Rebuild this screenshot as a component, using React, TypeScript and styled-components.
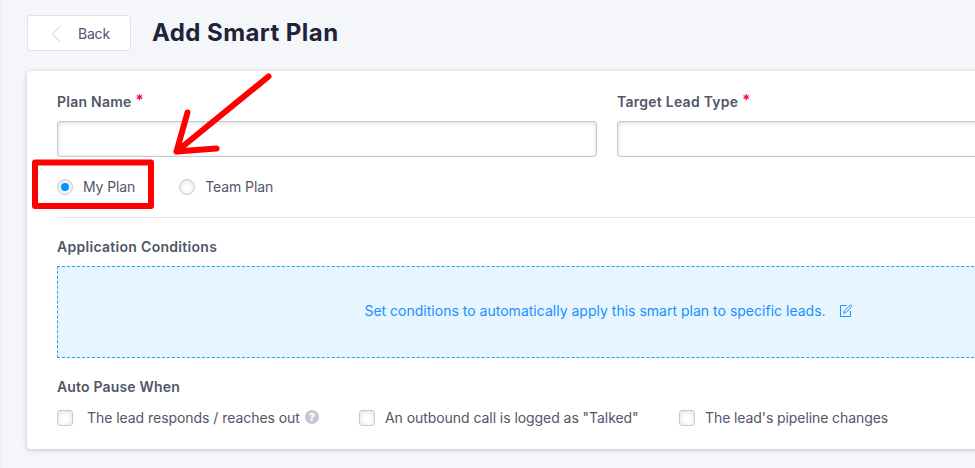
import React from "react";
import styled, { createGlobalStyle } from "styled-components";

const Global = createGlobalStyle`
  * { box-sizing: border-box; }
  body { margin: 0; background: #f5f6fa; overflow: hidden; }
`;

const Page = styled.main`
  position: relative;
  width: 975px;
  height: 468px;
  overflow: hidden;
  padding: 15px 0 0 27px;
  background: #f5f6fa;
  box-shadow: inset 3px 2px 3px -2px rgba(30, 35, 65, 0.05);
  color: #515669;
  font: 400 14px/20px Inter, sans-serif;
`;

const Header = styled.header`
  display: flex;
  align-items: center;
  gap: 21px;
  height: 36px;
`;

const BackButton = styled.button`
  display: flex;
  align-items: center;
  gap: 17px;
  width: 104px;
  height: 36px;
  padding: 2px 0 0 23px;
  border: 1px solid #dfe1e8;
  border-radius: 3px;
  background: #fff;
  color: #515669;
  font: inherit;
  letter-spacing: -0.2px;
  svg { display: block; }
`;

const Title = styled.h1`
  margin: 0;
  color: #202238;
  font-size: 24px;
  line-height: 34px;
  font-weight: 700;
  letter-spacing: 0.43px;
`;

const Card = styled.section`
  width: 1162px;
  height: 378px;
  margin-top: 20px;
  padding: 21px 30px 0;
  border-radius: 4px;
  background: #fff;
  box-shadow: 0 1px 5px rgba(20, 20, 30, 0.23);
`;

const Fields = styled.div`
  display: grid;
  grid-template-columns: 540px 540px;
  gap: 20px;
`;

const Label = styled.div<{ $spacing: number }>`
  height: 20px;
  font-weight: 600;
  letter-spacing: ${(p) => p.$spacing}px;
  white-space: nowrap;
`;

const Required = styled.span`
  display: inline-block;
  margin-left: 4px;
  color: #f5004b;
  font-size: 15px;
  line-height: 16px;
  vertical-align: 2px;
`;

const Input = styled.input`
  display: block;
  width: 100%;
  height: 36px;
  margin-top: 9px;
  border: 1px solid #c5c7d3;
  border-radius: 3px;
  background: #fff;
  box-shadow: inset 0 1px 4px rgba(35, 35, 60, 0.17);
`;

const RadioRow = styled.div`
  display: flex;
  gap: 44px;
  height: 60px;
  padding-top: 20px;
`;

const Option = styled.label<{ $gap: number; $spacing: number }>`
  display: flex;
  align-items: center;
  gap: ${(p) => p.$gap}px;
  height: 20px;
  letter-spacing: ${(p) => p.$spacing}px;
  white-space: nowrap;
`;

const Control = styled.input`
  appearance: none;
  display: grid;
  place-items: center;
  width: 16px;
  height: 16px;
  margin: 0;
  border: 1px solid #c6c8d4;
  border-radius: 3px;
  background: #fff;
  box-shadow: inset 0 1px 5px rgba(35, 35, 60, 0.16);
  &[type="radio"] { border-radius: 50%; }
  &:checked::after {
    content: "";
    width: 8px;
    height: 8px;
    border-radius: 50%;
    background: #0094ff;
  }
`;

const Section = styled.div`
  border-top: 1px solid #e7e8ea;
  padding-top: 19px;
`;

const Conditions = styled.div`
  display: flex;
  align-items: center;
  justify-content: center;
  gap: 13px;
  height: 92px;
  margin: 9px 0 19px;
  padding: 0 0 2px 1px;
  border: 1px dashed #24a0f6;
  background: #e7f5ff;
  color: #1890ff;
  letter-spacing: 0.01px;
  svg { display: block; }
`;

const Checks = styled.div`
  display: grid;
  grid-template-columns: 302px 320px auto;
  margin-top: 11px;
`;

const Help = styled.span`
  display: grid;
  place-items: center;
  width: 14px;
  height: 14px;
  margin: -2px 0 0 -9px;
  border-radius: 50%;
  background: #c6c8d3;
  color: #fff;
  font-size: 11px;
  line-height: 14px;
  font-weight: 800;
  letter-spacing: 0;
`;

const Annotation = styled.svg`
  position: absolute;
  left: 0;
  top: 0;
  pointer-events: none;
`;

export default function App() {
  return (
    <Page>
      <Global />
      <Header>
        <BackButton>
          <svg width="10" height="16" viewBox="0 0 10 16" fill="none" stroke="#c5c8d1">
            <path d="M9 .5 1.3 8 9 15.5" />
          </svg>
          Back
        </BackButton>
        <Title>Add Smart Plan</Title>
      </Header>
      <Card>
        <Fields>
          <div>
            <Label $spacing={0.24}>Plan Name<Required>*</Required></Label>
            <Input aria-label="Plan Name" />
          </div>
          <div>
            <Label $spacing={0.25}>Target Lead Type<Required>*</Required></Label>
            <Input aria-label="Target Lead Type" />
          </div>
        </Fields>
        <RadioRow>
          <Option $gap={10} $spacing={-0.12}><Control type="radio" name="plan" defaultChecked />My Plan</Option>
          <Option $gap={10} $spacing={-0.08}><Control type="radio" name="plan" />Team Plan</Option>
        </RadioRow>
        <Section>
          <Label $spacing={0.29}>Application Conditions</Label>
          <Conditions>
            <span>Set conditions to automatically apply this smart plan to specific leads.</span>
            <svg width="14" height="14" viewBox="0 0 14 14" fill="none" stroke="currentColor" strokeWidth="1">
              <path d="M7.5 1.5h-6v11h10V7M4.7 9.3l.6-2.4 5.8-5.6q.6-.5 1.1 0l.4.4q.5.6 0 1.1L6.9 8.6Z" />
            </svg>
          </Conditions>
          <Label $spacing={0.17}>Auto Pause When</Label>
          <Checks>
            <Option $gap={14} $spacing={-0.05}><Control type="checkbox" />The lead responds / reaches out<Help>?</Help></Option>
            <Option $gap={10} $spacing={-0.06}><Control type="checkbox" />An outbound call is logged as "Talked"</Option>
            <Option $gap={10} $spacing={-0.09}><Control type="checkbox" />The lead's pipeline changes</Option>
          </Checks>
        </Section>
      </Card>
      <Annotation width="975" height="468" fill="none" stroke="#ff0000" strokeWidth="6" strokeLinecap="round" strokeLinejoin="round">
        <rect x="35" y="162.5" width="116" height="43.5" />
        <path d="M268.5 76.5 176.5 151.5M187.5 112.5 176.5 151.5 216.5 148.5" />
      </Annotation>
    </Page>
  );
}
